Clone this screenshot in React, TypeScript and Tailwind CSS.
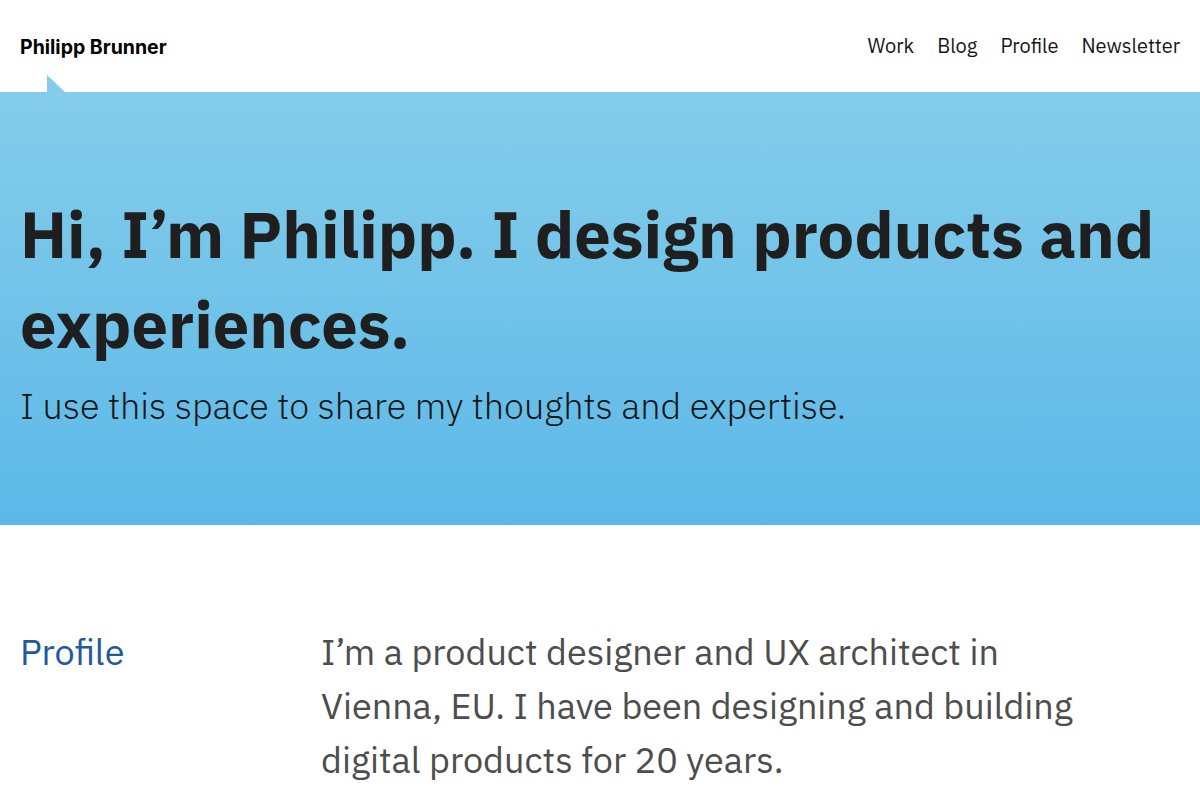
const navLinks = ["Work", "Blog", "Profile", "Newsletter"];

const plex = "font-['IBM_Plex_Sans','Noto_Sans',sans-serif]";

export default function App() {
  return (
    <div className={`min-h-screen bg-white ${plex}`}>
      <header className="relative flex h-[92px] items-center justify-between px-5">
        <a className="pt-[3px] font-['Inter',sans-serif] text-[19.5px] font-bold text-black">Philipp Brunner</a>
        <nav className="flex gap-[23px] text-[20px] text-[#161616]">
          {navLinks.map((link) => (
            <a key={link}>{link}</a>
          ))}
        </nav>
        {/* small pointer marking the active page */}
        <svg className="absolute bottom-0 left-[47px]" width="18" height="17" viewBox="0 0 18 17">
          <path d="M0 0 L18 17 L0 17 Z" fill="#84cdea" />
        </svg>
      </header>

      <section className="h-[433px] bg-gradient-to-b from-[#84cdea] to-[#5bb8e8] px-5 pt-[97px]">
        <h1 className="text-[65px] font-bold leading-[90px] text-[#1f1f1f]">
          Hi, I’m Philipp. I design products and experiences.
        </h1>
        <p className="mt-[12px] text-[36px] font-light leading-[50px] text-[#161616]">
          I use this space to share my thoughts and expertise.
        </p>
      </section>

      <section className="grid grid-cols-[301px_1fr] px-5 pt-[100px]">
        <h2 className="text-[36px] leading-[54px] text-[#1f5aa0]">Profile</h2>
        <p className="max-w-[770px] text-[36px] leading-[54px] text-[#4d4d4d]">
          I’m a product designer and UX architect in Vienna, EU. I have been designing and building
          digital products for 20 years.
        </p>
      </section>
    </div>
  );
}
